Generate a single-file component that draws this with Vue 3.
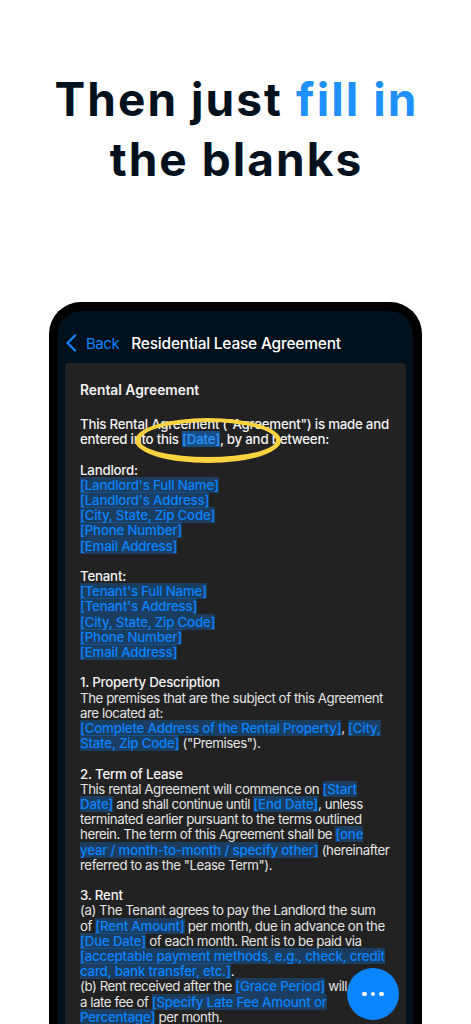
<template>
  <main class="page">
    <h1 class="headline">Then just <span class="accent">fill in</span><br />the blanks</h1>
    <section class="phone">
      <header class="nav">
        <svg class="chevron" viewBox="0 0 12 18" width="12" height="18" aria-hidden="true">
          <path d="M10 1.5 2.5 9l7.5 7.5" fill="none" stroke="#0a84ff" stroke-width="2.3" stroke-linecap="round" stroke-linejoin="round" />
        </svg>
        <span class="back">Back</span>
        <span class="nav-title">Residential Lease Agreement</span>
      </header>
      <article class="doc">
        <h2 class="doc-title">Rental Agreement</h2>
        <p class="para strong">This Rental Agreement ("Agreement") is made and<br />entered into this <mark class="hot">[Date]</mark>, by and between:</p>
        <p class="para">
          <b>Landlord:</b><br />
          <mark>[Landlord's Full Name]</mark><br />
          <mark>[Landlord's Address]</mark><br />
          <mark>[City, State, Zip Code]</mark><br />
          <mark>[Phone Number]</mark><br />
          <mark>[Email Address]</mark>
        </p>
        <p class="para">
          <b>Tenant:</b><br />
          <mark>[Tenant's Full Name]</mark><br />
          <mark>[Tenant's Address]</mark><br />
          <mark>[City, State, Zip Code]</mark><br />
          <mark>[Phone Number]</mark><br />
          <mark>[Email Address]</mark>
        </p>
        <p class="para">
          <b>1. Property Description</b><br />
          The premises that are the subject of this Agreement<br />
          are located at:<br />
          <mark>[Complete Address of the Rental Property]</mark>, <mark>[City,<br />State, Zip Code]</mark> ("Premises").
        </p>
        <p class="para">
          <b>2. Term of Lease</b><br />
          This rental Agreement will commence on <mark>[Start<br />Date]</mark> and shall continue until <mark>[End Date]</mark>, unless<br />
          terminated earlier pursuant to the terms outlined<br />
          herein. The term of this Agreement shall be <mark>[one<br />year / month-to-month / specify other]</mark> (hereinafter<br />
          referred to as the "Lease Term").
        </p>
        <p class="para">
          <b>3. Rent</b><br />
          (a) The Tenant agrees to pay the Landlord the sum<br />
          of <mark>[Rent Amount]</mark> per month, due in advance on the<br />
          <mark>[Due Date]</mark> of each month. Rent is to be paid via<br />
          <mark>[acceptable payment methods, e.g., check, credit<br />card, bank transfer, etc.]</mark>.<br />
          (b) Rent received after the <mark>[Grace Period]</mark> will incur<br />
          a late fee of <mark>[Specify Late Fee Amount or<br />Percentage]</mark> per month.
        </p>
      </article>
      <div class="ring" aria-hidden="true"></div>
      <button class="fab" type="button" aria-label="More">
        <i></i><i></i><i></i>
      </button>
    </section>
  </main>
</template>

<script setup>
</script>

<style>
html, body { margin: 0; height: 1024px; overflow: hidden; background: #fff; }
</style>

<style scoped>
.page {
  width: 471px;
  height: 1024px;
  overflow: hidden;
  display: flex;
  flex-direction: column;
  align-items: center;
  font-family: Inter, "Liberation Sans", sans-serif;
  background: #fff;
}
.headline {
  margin: 69px 0 0;
  padding-left: 2px;
  font-size: 46px;
  line-height: 60px;
  font-weight: 700;
  letter-spacing: 2.05px;
  color: #03101d;
  text-align: center;
  white-space: nowrap;
}
.accent { color: #2090ff; }
.phone {
  position: relative;
  box-sizing: border-box;
  flex: none;
  width: 373px;
  margin-top: 113px;
  border: 9px solid #000;
  border-bottom: 0;
  border-radius: 32px 32px 0 0;
  background: #00101c;
  padding: 0 7px;
  height: 800px;
}
.nav {
  box-sizing: border-box;
  display: flex;
  align-items: center;
  height: 52px;
  padding-top: 12px;
  color: #fff;
  font-size: 15.5px;
}
.chevron { flex: none; }
.back { margin-left: 9px; color: #0a84ff; font-size: 15px; letter-spacing: -0.45px; }
.nav-title { margin-left: 12px; font-weight: 500; letter-spacing: -0.22px; white-space: nowrap; }
.doc {
  box-sizing: border-box;
  background: #222;
  border-radius: 4px;
  padding: 19px 15px;
  height: 720px;
  color: #e4e4e4;
  font-size: 13.3px;
  line-height: 15.2px;
  letter-spacing: -0.45px;
  white-space: nowrap;
}
.doc-title {
  margin: 0 0 19px;
  font-size: 13.8px;
  line-height: 16px;
  font-weight: 600;
  letter-spacing: 0;
  color: #f2f2f2;
}
.para { margin: 0 0 15.2px; }
.strong { font-weight: 500; color: #f2f2f2; letter-spacing: -0.24px; }
b { font-weight: 500; color: #f2f2f2; letter-spacing: -0.22px; }
mark {
  background: rgba(10, 132, 255, 0.28);
  color: #0a84ff;
  font-weight: 500;
  letter-spacing: -0.21px;
}
.hot { background: rgba(10, 132, 255, 0.45); color: #2a95ff; }
.ring {
  position: absolute;
  left: 77px;
  top: 107px;
  width: 146px;
  height: 45px;
  box-sizing: border-box;
  border: solid #fdd33f;
  border-width: 4px 5px 6px;
  border-radius: 50%;
}
.fab {
  position: absolute;
  left: 289px;
  top: 657px;
  width: 52px;
  height: 52px;
  padding: 0;
  border: 0;
  border-radius: 50%;
  background: #0a84ff;
  display: flex;
  align-items: center;
  justify-content: center;
  gap: 4px;
}
.fab i {
  width: 4.6px;
  height: 4.6px;
  border-radius: 50%;
  background: #fff;
}
</style>
